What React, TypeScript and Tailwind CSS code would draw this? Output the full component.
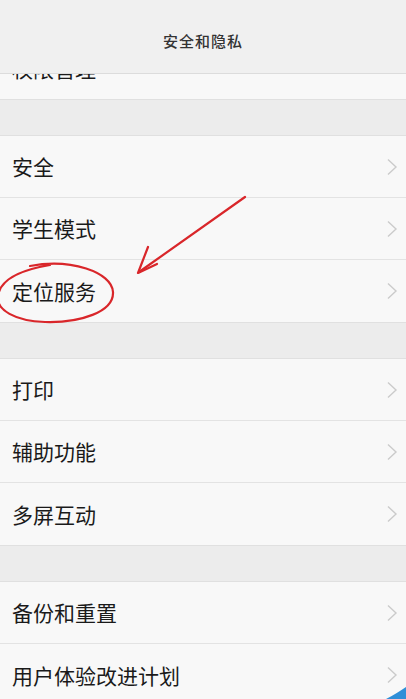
import React from "react";

const font = { fontFamily: '"Noto Sans CJK SC", "Noto Sans", sans-serif' };

function Chevron() {
  return (
    <svg width="12" height="18" viewBox="0 0 12 18" className="shrink-0">
      <path d="M2 1.5 L10 9 L2 16.5" fill="none" stroke="#cbcbcb" strokeWidth="1.4" />
    </svg>
  );
}

function Row({ label, last }: { label: string; last?: boolean }) {
  return (
    <div
      className={`flex h-[62px] items-center justify-between bg-[#f8f8f8] pl-[12px] pr-[8px] ${
        last ? "" : "border-b border-[#e3e3e3]"
      }`}
    >
      <span className="text-[21px] leading-none text-[#1a1a1a]">{label}</span>
      <Chevron />
    </div>
  );
}

function Group({ items }: { items: string[] }) {
  return (
    <div className="border-y border-[#e0e0e0]">
      {items.map((t, i) => (
        <Row key={t} label={t} last={i === items.length - 1} />
      ))}
    </div>
  );
}

export default function App() {
  return (
    <div className="relative h-[699px] w-[406px] overflow-hidden bg-[#ececec]" style={font}>
      <header className="flex h-[74px] items-center justify-center border-b border-[#dcdcdc] bg-[#f0f0f0] pt-[10px]">
        <span className="text-[15px] font-medium tracking-[1px] text-[#333]">安全和隐私</span>
      </header>

      {/* scrolled-off row, only its bottom edge shows */}
      <div className="relative h-[26px] overflow-hidden border-b border-[#e0e0e0] bg-[#f8f8f8]">
        <span className="absolute left-[12px] top-[-16px] text-[21px] leading-none text-[#1a1a1a]">权限管理</span>
      </div>

      <div className="h-[35px]" />
      <Group items={["安全", "学生模式", "定位服务"]} />
      <div className="h-[35px]" />
      <Group items={["打印", "辅助功能", "多屏互动"]} />
      <div className="h-[35px]" />
      <Group items={["备份和重置", "用户体验改进计划"]} />

      {/* red hand-drawn annotation */}
      <svg className="pointer-events-none absolute left-0 top-0" width="406" height="699" viewBox="0 0 406 699">
        <g fill="none" stroke="#d9262a" strokeWidth="2.2" strokeLinecap="round" strokeLinejoin="round">
          <path d="M245 197 L139 272" />
          <path d="M148 247 L138 273 L157 264" />
          <path d="M30 266 C70 258 112 272 113 292 C114 312 80 323 45 322 C15 321 -4 310 -2 296 C0 280 20 270 50 265" />
        </g>
      </svg>

      {/* corner swoosh */}
      <svg className="pointer-events-none absolute bottom-0 right-0" width="20" height="12" viewBox="0 0 20 12">
        <path d="M0 12 C8 8 14 4 20 0 L20 12 Z" fill="#2f8fd8" />
      </svg>
    </div>
  );
}
